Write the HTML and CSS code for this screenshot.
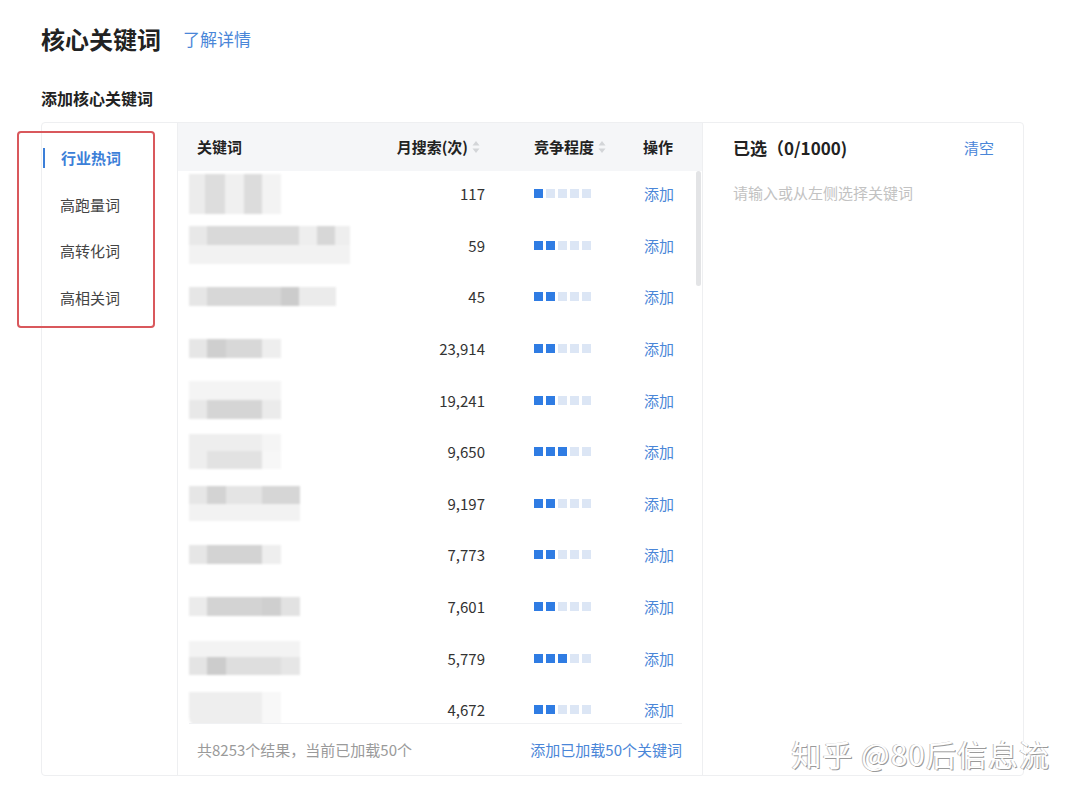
FILE: index.html
```html
<!DOCTYPE html>
<html lang="zh-CN">
<head>
    <meta charset="UTF-8">
    <meta name="viewport" content="width=device-width, initial-scale=1.0">
    <title>核心关键词</title>
    <link rel="stylesheet" href="styles.css">
</head>
<body>
    <div class="page">
        <div class="title-row">
            <h1>核心关键词</h1>
            <a class="link more" href="#">了解详情</a>
        </div>
        <h2>添加核心关键词</h2>

        <div class="panel">
            <!-- left category list -->
            <ul class="nav">
                <li class="active">行业热词</li>
                <li>高跑量词</li>
                <li>高转化词</li>
                <li>高相关词</li>
            </ul>
            <div class="mark"></div>

            <!-- keyword table -->
            <div class="table">
                <div class="thead">
                    <div class="c-kw">关键词</div>
                    <div class="c-num">月搜索(次)<span class="sort"><svg width="8" height="14" viewBox="0 0 8 14"><path d="M4 1 L7.5 5.5 H0.5 Z M4 13 L7.5 8.5 H0.5 Z" fill="#d3d5d8"/></svg></span></div>
                    <div class="c-lvl">竞争程度<span class="sort"><svg width="8" height="14" viewBox="0 0 8 14"><path d="M4 1 L7.5 5.5 H0.5 Z M4 13 L7.5 8.5 H0.5 Z" fill="#d3d5d8"/></svg></span></div>
                    <div class="c-op">操作</div>
                </div>
                <div class="tbody">
                    <div class="row">
                        <div class="c-kw"><div class="kw"><i class="b kw-1a"></i></div></div>
                        <div class="c-num">117</div>
                        <div class="c-lvl"><span class="lvl"><i class="on"></i><i></i><i></i><i></i><i></i></span></div>
                        <div class="c-op"><a class="link" href="#">添加</a></div>
                    </div>
                    <div class="row">
                        <div class="c-kw"><div class="kw"><i class="b kw-2a"></i><i class="b kw-2b"></i></div></div>
                        <div class="c-num">59</div>
                        <div class="c-lvl"><span class="lvl"><i class="on"></i><i class="on"></i><i></i><i></i><i></i></span></div>
                        <div class="c-op"><a class="link" href="#">添加</a></div>
                    </div>
                    <div class="row">
                        <div class="c-kw"><div class="kw"><i class="b kw-3a"></i></div></div>
                        <div class="c-num">45</div>
                        <div class="c-lvl"><span class="lvl"><i class="on"></i><i class="on"></i><i></i><i></i><i></i></span></div>
                        <div class="c-op"><a class="link" href="#">添加</a></div>
                    </div>
                    <div class="row">
                        <div class="c-kw"><div class="kw"><i class="b kw-4a"></i></div></div>
                        <div class="c-num">23,914</div>
                        <div class="c-lvl"><span class="lvl"><i class="on"></i><i class="on"></i><i></i><i></i><i></i></span></div>
                        <div class="c-op"><a class="link" href="#">添加</a></div>
                    </div>
                    <div class="row">
                        <div class="c-kw"><div class="kw"><i class="b kw-5a"></i><i class="b kw-5b"></i></div></div>
                        <div class="c-num">19,241</div>
                        <div class="c-lvl"><span class="lvl"><i class="on"></i><i class="on"></i><i></i><i></i><i></i></span></div>
                        <div class="c-op"><a class="link" href="#">添加</a></div>
                    </div>
                    <div class="row">
                        <div class="c-kw"><div class="kw"><i class="b kw-6a"></i><i class="b kw-6b"></i></div></div>
                        <div class="c-num">9,650</div>
                        <div class="c-lvl"><span class="lvl"><i class="on"></i><i class="on"></i><i class="on"></i><i></i><i></i></span></div>
                        <div class="c-op"><a class="link" href="#">添加</a></div>
                    </div>
                    <div class="row">
                        <div class="c-kw"><div class="kw"><i class="b kw-7a"></i><i class="b kw-7b"></i></div></div>
                        <div class="c-num">9,197</div>
                        <div class="c-lvl"><span class="lvl"><i class="on"></i><i class="on"></i><i></i><i></i><i></i></span></div>
                        <div class="c-op"><a class="link" href="#">添加</a></div>
                    </div>
                    <div class="row">
                        <div class="c-kw"><div class="kw"><i class="b kw-8a"></i></div></div>
                        <div class="c-num">7,773</div>
                        <div class="c-lvl"><span class="lvl"><i class="on"></i><i class="on"></i><i></i><i></i><i></i></span></div>
                        <div class="c-op"><a class="link" href="#">添加</a></div>
                    </div>
                    <div class="row">
                        <div class="c-kw"><div class="kw"><i class="b kw-9a"></i></div></div>
                        <div class="c-num">7,601</div>
                        <div class="c-lvl"><span class="lvl"><i class="on"></i><i class="on"></i><i></i><i></i><i></i></span></div>
                        <div class="c-op"><a class="link" href="#">添加</a></div>
                    </div>
                    <div class="row">
                        <div class="c-kw"><div class="kw"><i class="b kw-10a"></i><i class="b kw-10b"></i></div></div>
                        <div class="c-num">5,779</div>
                        <div class="c-lvl"><span class="lvl"><i class="on"></i><i class="on"></i><i class="on"></i><i></i><i></i></span></div>
                        <div class="c-op"><a class="link" href="#">添加</a></div>
                    </div>
                    <div class="row">
                        <div class="c-kw"><div class="kw"><i class="b kw-11a"></i></div></div>
                        <div class="c-num">4,672</div>
                        <div class="c-lvl"><span class="lvl"><i class="on"></i><i class="on"></i><i></i><i></i><i></i></span></div>
                        <div class="c-op"><a class="link" href="#">添加</a></div>
                    </div>
                    <div class="scrollbar"></div>
                </div>
                <div class="tfoot">
                    <span class="total">共8253个结果，当前已加载50个</span>
                    <a class="link" href="#">添加已加载50个关键词</a>
                </div>
            </div>

            <!-- selected keywords -->
            <div class="selected">
                <div class="sel-head">
                    <span class="sel-title">已选（0/1000)</span>
                    <a class="link" href="#">清空</a>
                </div>
                <div class="sel-hint">请输入或从左侧选择关键词</div>
            </div>

            <div class="watermark">知乎 @80后信息流</div>
        </div>
    </div>
</body>
</html>
```

FILE: styles.css
```css
* {
    box-sizing: border-box;
}
body {
    margin: 0;
    background-color: #ffffff;
    font-family: "Noto Sans CJK SC", "Noto Sans", sans-serif;
    color: #333333;
}
.page {
    padding: 21px 0 0 41px;
    width: 1024px;
}
.title-row {
    display: flex;
    align-items: center;
    height: 34px;
}
h1 {
    margin: 0;
    font-size: 24px;
    font-weight: bold;
    color: #222222;
}
.link {
    color: #4a86d8;
    text-decoration: none;
}
.more {
    margin-left: 22px;
    font-size: 17px;
}
h2 {
    margin: 32px 0 0 0;
    font-size: 16px;
    line-height: 22px;
    font-weight: bold;
    color: #222222;
}
.panel {
    position: relative;
    display: flex;
    margin-top: 13px;
    height: 654px;
    border: 1px solid #eeeff1;
    border-radius: 4px;
}

/* left nav */
.nav {
    list-style: none;
    margin: 0;
    padding: 12px 0 0 0;
    width: 136px;
    border-right: 1px solid #eeeff1;
}
.nav li {
    height: 46.7px;
    line-height: 46.7px;
    padding-left: 18px;
    font-size: 15px;
    color: #444444;
}
.nav li.active {
    color: #3c7fd8;
    font-weight: bold;
    border-left: 2px solid #3c7fd8;
    padding-left: 16px;
    margin-left: 1px;
    line-height: 20px;
    height: 20px;
    margin-top: 13px;
    margin-bottom: 13.7px;
}
.mark {
    position: absolute;
    left: -25px;
    top: 8px;
    width: 138px;
    height: 197px;
    border: 2px solid #d9585c;
    border-radius: 4px;
}

/* table */
.table {
    display: flex;
    flex-direction: column;
    width: 525px;
    border-right: 1px solid #eeeff1;
}
.thead,
.row {
    display: flex;
    align-items: center;
    white-space: nowrap;
}
.thead {
    height: 48px;
    background-color: #f5f6f8;
    font-size: 15px;
    font-weight: bold;
    color: #222222;
}
.c-kw {
    width: 200px;
    padding-left: 11px;
}
.thead .c-kw {
    padding-left: 19px;
}
.c-num {
    width: 107px;
    display: flex;
    justify-content: flex-end;
    align-items: center;
}
.thead .c-num {
    width: 102px;
}
.c-lvl {
    width: 159px;
    padding-left: 49px;
    display: flex;
    align-items: center;
}
.thead .c-lvl {
    width: 163px;
    padding-left: 54px;
}
.sort {
    display: inline-flex;
    margin-left: 4px;
}
.tbody {
    position: relative;
    height: 553px;
    overflow: hidden;
}
.row {
    height: 51.6px;
    padding-bottom: 6px;
    font-size: 15px;
    color: #333333;
}
.lvl {
    display: flex;
    gap: 3px;
}
.lvl i {
    width: 9px;
    height: 9px;
    background-color: #dce6f5;
}
.lvl i.on {
    background-color: #2f7ce3;
}
.scrollbar {
    position: absolute;
    right: 1px;
    top: 0;
    width: 5px;
    height: 115px;
    border-radius: 3px;
    background-color: #e3e4e6;
}

/* blurred keywords */
.kw {
    display: flex;
    flex-direction: column;
    filter: blur(0.8px);
}
.b {
    display: block;
    height: 19px;
}
.kw-1a { width: 92px; height: 40px; background: linear-gradient(90deg, #ececec 0 16px, #dddddd 16px 36px, #f0f0f0 36px 55px, #dcdcdc 55px 73px, #f3f3f3 73px); }
.kw-2a { width: 161px; background: linear-gradient(90deg, #e8e8e8 0 18px, #d9d9d9 18px 110px, #eeeeee 110px 128px, #d7d7d7 128px 146px, #eeeeee 146px); }
.kw-2b { width: 161px; background: #f2f2f2; }
.kw-3a { width: 147px; background: linear-gradient(90deg, #e6e6e6 0 18px, #d7d7d7 18px 92px, #cccccc 92px 110px, #ebebeb 110px); }
.kw-4a { width: 92px; background: linear-gradient(90deg, #e6e6e6 0 18px, #cfcfcf 18px 37px, #d8d8d8 37px 73px, #eeeeee 73px); }
.kw-5a { width: 92px; background: #f4f4f4; }
.kw-5b { width: 92px; background: linear-gradient(90deg, #e8e8e8 0 18px, #d5d5d5 18px 73px, #ebebeb 73px); }
.kw-6a { width: 92px; height: 17px; background: linear-gradient(90deg, #eeeeee 0 73px, #f5f5f5 73px); }
.kw-6b { width: 92px; height: 18px; background: linear-gradient(90deg, #eeeeee 0 18px, #e2e2e2 18px 73px, #f7f7f7 73px); }
.kw-7a { width: 111px; height: 18px; background: linear-gradient(90deg, #e6e6e6 0 18px, #d3d3d3 18px 37px, #e4e4e4 37px 73px, #d6d6d6 73px); }
.kw-7b { width: 111px; height: 17px; background: #f2f2f2; }
.kw-8a { width: 92px; background: linear-gradient(90deg, #e6e6e6 0 18px, #d3d3d3 18px 73px, #eeeeee 73px); }
.kw-9a { width: 111px; background: linear-gradient(90deg, #ebebeb 0 18px, #d3d3d3 18px 73px, #cfcfcf 73px 92px, #e2e2e2 92px); }
.kw-10a { width: 111px; height: 16px; background: #f3f3f3; }
.kw-10b { width: 111px; height: 18px; background: linear-gradient(90deg, #e4e4e4 0 18px, #cccccc 18px 37px, #dedede 37px 92px, #e6e6e6 92px); }
.kw-11a { width: 92px; height: 35px; border-radius: 0 0 0 10px; background: linear-gradient(90deg, #eeeeee 0 73px, #f8f8f8 73px); }

.tfoot {
    display: flex;
    justify-content: space-between;
    align-items: center;
    height: 52px;
    margin: 0 20px 0 11px;
    padding-left: 8px;
    border-top: 1px solid #f0f1f3;
    font-size: 15px;
}
.total {
    color: #9a9a9a;
}

/* selected panel */
.selected {
    flex: 1;
    padding: 0 29px 0 30px;
}
.sel-head {
    display: flex;
    justify-content: space-between;
    align-items: center;
    height: 48px;
}
.sel-title {
    font-size: 17px;
    font-weight: bold;
    color: #222222;
}
.sel-head .link {
    font-size: 15px;
}
.sel-hint {
    margin-top: 11px;
    font-size: 15px;
    color: #c2c2c2;
}
.watermark {
    position: absolute;
    right: -27px;
    bottom: 0;
    font-size: 30px;
    color: #ffffff;
    letter-spacing: 1px;
    text-shadow: 1px 1px 0 #9a9a9a, -1px 0 0 #c0c0c0;
}
```
